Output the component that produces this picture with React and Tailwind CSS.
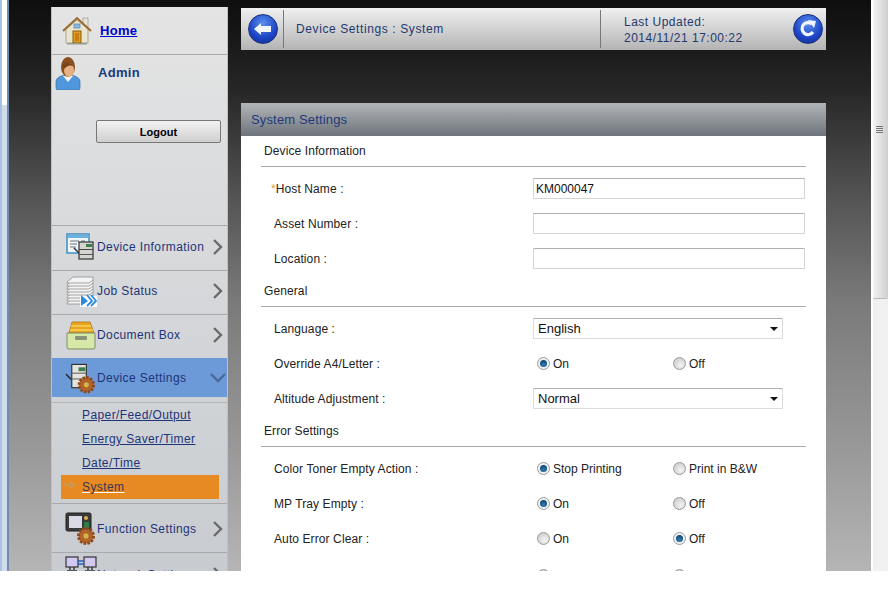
import React from 'react';

const FONT = "font-['Liberation_Sans',Arial,sans-serif]";

// --- icons ---
const HomeIcon = () => (
  <svg width="32" height="32" viewBox="0 0 32 32">
    <rect x="22" y="3" width="5" height="10" fill="#e4e4dc" stroke="#999" strokeWidth="0.7" />
    <path d="M5 14 L16 5 L27 14 V28 H5 Z" fill="#e8e6cf" stroke="#a9a68c" strokeWidth="1" />
    <path d="M2 16 L16 3 L30 16" fill="none" stroke="#9c6a2d" strokeWidth="2" />
    <rect x="13" y="9" width="6" height="4" fill="#8db8e0" stroke="#5c7fa6" strokeWidth="0.7" />
    <rect x="12" y="16" width="8" height="12" fill="#e2a11f" stroke="#8a5a14" strokeWidth="1" />
    <rect x="14" y="18" width="4" height="8" fill="#c87d17" />
    <rect x="6" y="28" width="20" height="1.5" fill="#9a9a8c" />
  </svg>
);

const AdminIcon = () => (
  <svg width="26" height="34" viewBox="0 0 26 34">
    <path d="M1 32 V26 C1 21 7 19 13 19 C19 19 25 21 25 26 V32 Q25 34 23 34 H3 Q1 34 1 32 Z" fill="#4f97dc" stroke="#3a6d9e" strokeWidth="0.7" />
    <path d="M8 20 L13 26 L18 20 Z" fill="#f4f4f4" />
    <ellipse cx="13" cy="11" rx="7" ry="10" fill="#8a4f1e" />
    <ellipse cx="14" cy="14" rx="5" ry="7" fill="#e8b183" />
    <path d="M7 9 Q13 3 20 11 Q14 7 9 13 Z" fill="#7a4417" />
  </svg>
);

const DeviceInfoIcon = () => (
  <svg width="32" height="30" viewBox="0 0 32 30">
    <rect x="2" y="2" width="22" height="19" fill="#eef5fb" stroke="#3f8fc4" strokeWidth="1.5" />
    <rect x="3" y="3" width="20" height="3" fill="#6db2de" />
    <path d="M5 9 H14 M5 12 H12 M5 15 H11 M16 9 H20" stroke="#777" strokeWidth="1" />
    <path d="M9 16 L14 21" stroke="#333" strokeWidth="1.5" />
    <rect x="14" y="10" width="14" height="17" fill="#d5d5d0" stroke="#333" strokeWidth="1.2" />
    <rect x="21" y="12" width="6" height="3" fill="#3e7d4c" />
    <rect x="14" y="17" width="14" height="1" fill="#444" />
    <rect x="14" y="22" width="14" height="1" fill="#555" />
  </svg>
);

const JobStatusIcon = () => (
  <svg width="32" height="32" viewBox="0 0 32 32">
    {[25, 22, 19, 16, 13, 10, 7, 4].map((y) => (
      <path key={y} d={`M2 ${y + 3} L8 ${y - 2} H28 V${y + 1} L24 ${y + 4} H2 Z`} fill="#f3f3f3" stroke="#8f8f8f" strokeWidth="0.8" />
    ))}
    <rect x="15" y="21" width="17" height="11" fill="#fff" />
    <path d="M16 20 L23 26 L16 31 Z" fill="#2c8be0" />
    <path d="M22 20 L27 26 L22 31 M26 20 L31 26 L26 31" fill="none" stroke="#2c8be0" strokeWidth="1.8" />
  </svg>
);

const DocBoxIcon = () => (
  <svg width="30" height="30" viewBox="0 0 30 30">
    <path d="M6 2 H24 L28 13 H3 Z" fill="#eaa51f" stroke="#a8741a" strokeWidth="0.8" />
    <path d="M5 6 H25 M4 10 H27" stroke="#f8cf60" strokeWidth="1.5" />
    <path d="M1 13 H29 V27 Q29 29 27 29 H3 Q1 29 1 27 Z" fill="#d6e8a8" stroke="#7f8a66" strokeWidth="1" />
    <rect x="9" y="16" width="12" height="4" rx="1" fill="#8a9378" />
  </svg>
);

const Gear = ({ cx, cy }) => (
  <g>
    <circle cx={cx} cy={cy} r="7.5" fill="#b5622b" stroke="#8a4a1e" strokeWidth="3" strokeDasharray="2.5 1.4" />
    <circle cx={cx} cy={cy} r="6" fill="#b5622b" />
    <circle cx={cx} cy={cy} r="3.2" fill="#d9b04a" stroke="#7d4a1a" strokeWidth="0.6" />
  </g>
);

const DeviceSettingsIcon = () => (
  <svg width="34" height="32" viewBox="0 0 34 32">
    <path d="M2 12 L9 19" stroke="#333" strokeWidth="1.6" />
    <rect x="8" y="2" width="15" height="24" fill="#e4e4df" stroke="#333" strokeWidth="1.2" />
    <rect x="15" y="5" width="7" height="4" fill="#3e7d4c" />
    <path d="M8 11 H23 M8 17 H23" stroke="#555" strokeWidth="1" />
    <Gear cx={23} cy={23} />
  </svg>
);

const FunctionIcon = () => (
  <svg width="32" height="34" viewBox="0 0 32 34">
    <rect x="1" y="1" width="25" height="18" rx="1.5" fill="#3a3a3a" stroke="#222" />
    <rect x="4" y="4" width="13" height="12" fill="#d8dbe6" />
    <circle cx="21" cy="6" r="2" fill="#d9b04a" />
    <rect x="19" y="10" width="5" height="6" fill="#2f7d48" />
    <Gear cx={21} cy={24} />
  </svg>
);

const NetworkIcon = () => (
  <svg width="32" height="20" viewBox="0 0 32 20">
    <rect x="1" y="1" width="12" height="10" fill="#d3c8ef" stroke="#333" strokeWidth="1.2" />
    <rect x="19" y="1" width="12" height="10" fill="#d3c8ef" stroke="#333" strokeWidth="1.2" />
    <path d="M13 5 H19 M13 8 H19" stroke="#2060c0" strokeWidth="1.4" />
    <path d="M5 11 V14 M9 11 V14 M2 15 H12 M23 11 V14 M27 11 V14 M20 15 H30" stroke="#333" strokeWidth="1.4" />
  </svg>
);

const Chevron = ({ open }) => (
  <svg width="16" height="16" viewBox="0 0 16 16" className="shrink-0">
    <path d={open ? 'M1 4 L8 11 L15 4' : 'M6 1 L13 8 L6 15'} fill="none" stroke={open ? '#4a6a96' : '#6a6a6a'} strokeWidth="2.4" />
  </svg>
);

const RoundButton = ({ children }) => (
  <div className="w-[30px] h-[30px] rounded-full border border-[#16307c] bg-[radial-gradient(circle_at_50%_30%,#5b8ff0,#1c44c4_60%,#10308f)] flex items-center justify-center shrink-0">
    {children}
  </div>
);

const Radio = ({ on }) => (
  <span className={`w-[13px] h-[13px] rounded-full border border-[#9a9a9a] flex items-center justify-center shrink-0 ${on ? 'bg-[#eef2f5]' : 'bg-[radial-gradient(circle_at_60%_65%,#f4f4f4,#c4c4c4)]'}`}>
    {on && <span className="w-[7px] h-[7px] rounded-full bg-[radial-gradient(circle_at_50%_70%,#2f7fb0,#0b3560)]" />}
  </span>
);

// --- sidebar ---
const NavRow = ({ icon, label, box, open, bordered = true, iconBox = '' }) => (
  <div className={`flex items-center pl-[12px] ${open ? 'pr-[1px]' : 'pr-[3px]'} ${box} ${bordered ? 'border-b border-[#a9a9a9]' : ''} ${open ? 'bg-[#6c9ad8]' : ''}`}>
    <div className={`w-[33px] flex justify-center shrink-0 ${iconBox}`}>{icon}</div>
    <span className="flex-1 text-[12px] tracking-[0.4px] text-[#1e3478]">{label}</span>
    <Chevron open={open} />
  </div>
);

const SubLink = ({ label, active }) => (
  <div className={`h-[24px] flex items-center pl-[21px] relative ${active ? 'bg-[#e88a22]' : ''}`}>
    {active && (
      <svg width="14" height="8" viewBox="0 0 14 8" className="absolute left-[2px] top-[6px]">
        <path d="M1 1 V4 H8 M7 1 L11 4 L7 7" fill="none" stroke="#c99a5a" strokeWidth="1.6" />
      </svg>
    )}
    <span className={`text-[12px] tracking-[0.4px] underline ${active ? 'text-[#3a3550] decoration-white' : 'text-[#1e3478]'}`}>{label}</span>
  </div>
);

const Sidebar = () => (
  <div className="w-[177px] shrink-0 mt-[7px] bg-[linear-gradient(#e4e4e4,#d8dadc_40%,#c8ccd0)] border-x border-[#c0c0c0]">
    <div className="h-[48px] flex items-center pl-[9px] border-b border-[#a9a9a9]">
      <HomeIcon />
      <a className="ml-[7px] text-[13px] font-bold tracking-[0.3px] text-[#0000cc] underline">Home</a>
    </div>
    <div className="h-[171px] border-b border-[#a9a9a9] flex flex-col">
      <div className="flex items-start pl-[3px] pt-[1px] h-[65px]">
        <AdminIcon />
        <span className="ml-[17px] mt-[7px] text-[13px] font-bold tracking-[0.3px] text-[#1a3a80]">Admin</span>
      </div>
      <button className="ml-[44px] w-[125px] h-[23px] pt-[1px] rounded-[2px] border border-[#777] bg-[linear-gradient(#f2f2f2,#cfcfcf)] text-[11px] font-bold text-black">
        Logout
      </button>
    </div>
    <NavRow icon={<DeviceInfoIcon />} label="Device Information" box="h-[45px] pb-[3px]" />
    <NavRow icon={<JobStatusIcon />} label="Job Status" box="h-[44px] pb-[3px]" />
    <NavRow icon={<DocBoxIcon />} label="Document Box" box="h-[43px] pb-[3px]" bordered={false} />
    <NavRow icon={<DeviceSettingsIcon />} label="Device Settings" box="h-[39px] pt-[1px]" open bordered={false} />
    <div className="h-[107px] pt-[5px] border-b border-[#a9a9a9]">
      <div className="border-t border-[#b4b4b4] px-[9px]">
        <div className="mr-[-1px]">
          <SubLink label="Paper/Feed/Output" />
          <SubLink label="Energy Saver/Timer" />
          <SubLink label="Date/Time" />
          <SubLink label="System" active />
        </div>
      </div>
    </div>
    <NavRow icon={<FunctionIcon />} label="Function Settings" box="h-[49px] pt-[2px]" />
    <NavRow icon={<NetworkIcon />} label="Network Settings" box="h-[44px]" iconBox="mb-[18px]" />
  </div>
);

// --- form ---
const Section = ({ title, children }) => (
  <div>
    <div className="h-[31px] pl-[3px] pt-[8px] border-b border-[#aaaaaa] text-[12px] tracking-[0.1px] text-[#222] leading-[15px]">{title}</div>
    <div className="pt-[4px]">{children}</div>
  </div>
);

const Row = ({ label, required, children }) => (
  <div className="h-[35px] flex items-center">
    <div className={`w-[272px] shrink-0 text-[12px] tracking-[0.1px] text-[#222] ${required ? 'pl-[10px]' : 'pl-[13px]'}`}>
      {required && <span className="text-[#e2a02a]">*</span>}
      {label}
    </div>
    {children}
  </div>
);

const TextBox = ({ value }) => (
  <div className="w-[272px] h-[21px] border border-[#d4d4d4] border-t-[#b0b0b0] rounded-[1px] px-[2px] text-[12px] leading-[20px] text-[#111]">{value}</div>
);

const Select = ({ value }) => (
  <div className="w-[250px] h-[21px] border border-[#dcdcdc] border-t-[#b0b0b0] rounded-[1px] pl-[4px] pr-[4px] flex items-center justify-between text-[13px] text-[#111]">
    <span>{value}</span>
    <svg width="8" height="4" viewBox="0 0 8 4"><path d="M0 0 H8 L4 4 Z" fill="#111" /></svg>
  </div>
);

const RadioPair = ({ a, b, on, box = '' }) => (
  <div className={`flex ${box}`}>
    <div className="w-[140px] pl-[4px] flex items-center gap-[3px] text-[12px] text-[#222]">
      <Radio on={on === 0} />
      <span>{a}</span>
    </div>
    <div className="flex items-center gap-[3px] text-[12px] text-[#222]">
      <Radio on={on === 1} />
      <span>{b}</span>
    </div>
  </div>
);

const Content = () => (
  <div className="w-[585px] shrink-0 ml-[13px]">
    <div className="mt-[8px] h-[42px] bg-[linear-gradient(#f0f0f0,#b4b4b4)] flex items-center text-[12px] tracking-[0.6px] text-[#24396f]">
      <div className="w-[43px] h-[38px] border-r border-[#777] pl-[7px] flex items-center shrink-0">
        <RoundButton>
          <svg width="20" height="14" viewBox="0 0 20 14">
            <path d="M1 7 L8 1 V4 H18 V10 H8 V13 Z" fill="#f2f6ff" />
          </svg>
        </RoundButton>
      </div>
      <div className="w-[317px] h-[38px] border-r border-[#777] pl-[12px] flex items-center shrink-0">Device Settings : System</div>
      <div className="flex-1 pl-[23px] pt-[1px] leading-[16px] tracking-[0.5px]">
        <div>Last Updated:</div>
        <div>2014/11/21 17:00:22</div>
      </div>
      <div className="pr-[3px]">
        <RoundButton>
          <svg width="20" height="20" viewBox="0 0 20 20">
            <path d="M15 13 A6 6 0 1 1 14 5" fill="none" stroke="#f2f6ff" strokeWidth="3.2" />
            <path d="M10 1 L18 2 L16 9 Z" fill="#f2f6ff" />
          </svg>
        </RoundButton>
      </div>
    </div>

    <div className="mt-[53px] h-[33px] pl-[10px] flex items-center bg-[linear-gradient(#b2b5b7,#6e747c)] text-[13px] tracking-[0.15px] text-[#1f3a7c]">
      System Settings
    </div>

    <div className="bg-white px-[20px] pb-[60px]">
      <Section title="Device Information">
        <Row label="Host Name :" required><TextBox value="KM000047" /></Row>
        <Row label="Asset Number :"><TextBox /></Row>
        <Row label="Location :"><TextBox /></Row>
      </Section>
      <Section title="General">
        <Row label="Language :"><Select value="English" /></Row>
        <Row label="Override A4/Letter :"><RadioPair a="On" b="Off" on={0} /></Row>
        <Row label="Altitude Adjustment :"><Select value="Normal" /></Row>
      </Section>
      <Section title="Error Settings">
        <Row label="Color Toner Empty Action :"><RadioPair a="Stop Printing" b="Print in B&W" on={0} /></Row>
        <Row label="MP Tray Empty :"><RadioPair a="On" b="Off" on={0} /></Row>
        <Row label="Auto Error Clear :"><RadioPair a="On" b="Off" on={1} /></Row>
        <Row label=""><RadioPair a="" b="" box="mt-[4px]" /></Row>
      </Section>
    </div>
  </div>
);

const Scrollbar = () => (
  <div className="w-[17px] shrink-0 bg-[#f0f0f0] border-l-2 border-white">
    <div className="h-[299px] rounded-b-[2px] border-b border-[#bbb] bg-[linear-gradient(90deg,#f4f4f4,#e0e0e0_50%,#d0d0d0)] flex items-center justify-center">
      <div className="w-[7px] h-[7px] flex flex-col justify-between mt-[-40px] mr-[3px]">
        <div className="h-px bg-[#777]" />
        <div className="h-px bg-[#777]" />
        <div className="h-px bg-[#777]" />
        <div className="h-px bg-[#777]" />
      </div>
    </div>
  </div>
);

export default function App() {
  return (
    <div className={`w-[888px] h-[614px] bg-white overflow-hidden ${FONT}`}>
      <div className="h-[571px] flex overflow-hidden">
        {/* left window edge */}
        <div className="w-[9px] shrink-0 flex border-r-2 border-[#6d8cae]">
          <div className="w-[2px] bg-[#a9c3de]" />
          <div className="flex-1 bg-[linear-gradient(#ffffff_105px,#cfdcec_105px)]" />
        </div>
        <div className="flex-1 flex pl-[42px] bg-[linear-gradient(#0e0e0e,#252525_15%,#555_35%,#7a7a7a_53%,#999_79%,#b5b5b5)]">
          <Sidebar />
          <Content />
        </div>
        <Scrollbar />
      </div>
    </div>
  );
}
